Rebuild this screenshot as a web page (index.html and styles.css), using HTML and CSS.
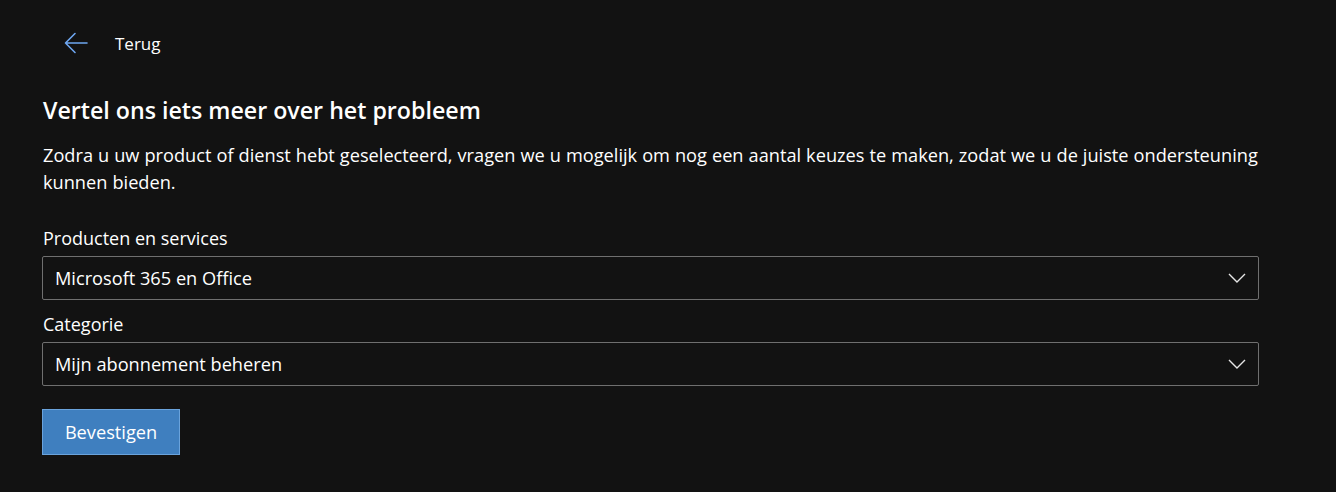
FILE: index.html
```html
<!DOCTYPE html>
<html lang="nl">
<head>
    <meta charset="UTF-8">
    <meta name="viewport" content="width=device-width, initial-scale=1.0">
    <title>Ondersteuning</title>
    <link rel="stylesheet" href="styles.css">
</head>
<body>
    <div class="page">
        <a class="back" href="#">
            <svg class="back-icon" width="24" height="24" viewBox="0 0 24 24" fill="none" stroke="#6ea6f0" stroke-width="1.6" stroke-linecap="round" stroke-linejoin="round">
                <path d="M23 12H1.5M11 2.5L1.5 12l9.5 9.5"/>
            </svg>
            <span>Terug</span>
        </a>

        <h1 class="title">Vertel ons iets meer over het probleem</h1>
        <p class="intro">Zodra u uw product of dienst hebt geselecteerd, vragen we u mogelijk om nog een aantal keuzes te maken, zodat we u de juiste ondersteuning kunnen bieden.</p>

        <div class="field first">
            <label class="field-label">Producten en services</label>
            <div class="select">
                <span>Microsoft 365 en Office</span>
                <svg width="18" height="10" viewBox="0 0 18 10" fill="none" stroke="#e6e6e6" stroke-width="1.4"><path d="M1 1l8 8 8-8"/></svg>
            </div>
        </div>

        <div class="field">
            <label class="field-label">Categorie</label>
            <div class="select">
                <span>Mijn abonnement beheren</span>
                <svg width="18" height="10" viewBox="0 0 18 10" fill="none" stroke="#e6e6e6" stroke-width="1.4"><path d="M1 1l8 8 8-8"/></svg>
            </div>
        </div>

        <button class="confirm">Bevestigen</button>
    </div>
</body>
</html>
```

FILE: styles.css
```css
body {
    margin: 0;
    background-color: #121212;
    color: #ffffff;
    font-family: "Open Sans", "Noto Sans", Arial, sans-serif;
}
.page {
    width: 1217px;
    padding: 25px 0 0 42px;
}
.back {
    display: flex;
    align-items: center;
    gap: 27px;
    margin-left: 22px;
    color: #ffffff;
    text-decoration: none;
    font-size: 17px;
    height: 36px;
}
.title {
    margin: 33px 0 0 1px;
    font-size: 23.2px;
    font-weight: 600;
    line-height: 32px;
}
.intro {
    margin: 16px -24px 0 1px;
    font-size: 18.2px;
    word-spacing: 0.3px;
    line-height: 27px;
}
.field {
    margin-top: 11px;
}
.field.first {
    margin-top: 29px;
}
.field-label {
    display: block;
    font-size: 18px;
    line-height: 26px;
    margin-left: 1px;
    margin-bottom: 5px;
}
.select {
    box-sizing: border-box;
    height: 44px;
    border: 1px solid #6f6f6f;
    border-radius: 2px;
    display: flex;
    align-items: center;
    justify-content: space-between;
    padding: 0 12px 0 12px;
    font-size: 18.2px;
}
.confirm {
    margin-top: 23px;
    width: 138px;
    height: 46px;
    background-color: #3f7fbf;
    border: 1px solid #6aa3dc;
    color: #ffffff;
    font-family: inherit;
    font-size: 18.2px;
}
```
